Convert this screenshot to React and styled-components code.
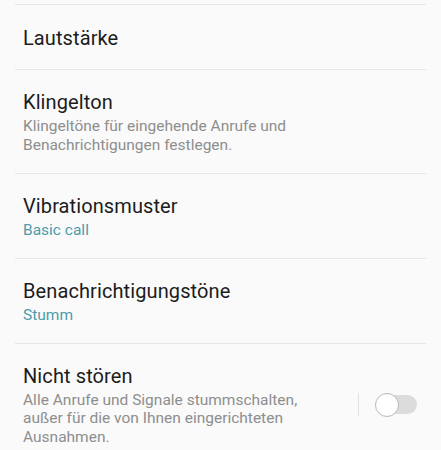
import React, { useState } from 'react';
import styled, { createGlobalStyle } from 'styled-components';

const GlobalStyle = createGlobalStyle`
  html, body {
    margin: 0;
    padding: 0;
    background: #fafafa;
  }
  body {
    font-family: Roboto, 'Noto Sans', sans-serif;
    -webkit-font-smoothing: antialiased;
  }
`;

const Page = styled.div`
  width: 441px;
  height: 450px;
  overflow: hidden;
  background: #fafafa;
  padding-top: 4px;
  box-sizing: border-box;
`;

const List = styled.ul`
  list-style: none;
  margin: 0 15px;
  padding: 0;
  border-top: 1px solid #e6e6e6;
`;

const Item = styled.li`
  display: flex;
  align-items: center;
  min-height: 65px;
  padding: 20px 9px 18.5px 8px;
  box-sizing: border-box;
  border-bottom: 1px solid #e6e6e6;
`;

const TextBlock = styled.div`
  flex: 1;
  display: flex;
  flex-direction: column;
  gap: 3px;
  max-width: 305px;
`;

const Title = styled.div`
  font-size: 20px;
  line-height: 24px;
  color: #1c1c1c;
  letter-spacing: 0.1px;
`;

const Sub = styled.div`
  font-size: 15.5px;
  line-height: 18.5px;
  color: ${(p) => (p.$accent ? '#4c9cab' : '#8e8e8e')};
`;

const Control = styled.div`
  display: flex;
  align-items: center;
  margin-left: auto;
  gap: 16px;
`;

const Rule = styled.span`
  width: 1px;
  height: 23px;
  background: #e2e2e2;
`;

const Switch = styled.button`
  position: relative;
  width: 42px;
  height: 24px;
  padding: 0;
  border: none;
  background: transparent;
  cursor: pointer;
`;

const Track = styled.span`
  position: absolute;
  right: 0;
  top: 2.5px;
  width: 34px;
  height: 19px;
  border-radius: 10px;
  background: ${(p) => (p.$on ? '#8cc4cf' : '#dcdcdc')};
`;

const Thumb = styled.span`
  position: absolute;
  top: 0;
  left: ${(p) => (p.$on ? '18px' : '0')};
  width: 24px;
  height: 24px;
  box-sizing: border-box;
  border-radius: 50%;
  background: #ffffff;
  border: 1.5px solid #b8b8b8;
`;

const items = [
  { title: 'Lautstärke' },
  { title: 'Klingelton', sub: 'Klingeltöne für eingehende Anrufe und Benachrichtigungen festlegen.' },
  { title: 'Vibrationsmuster', sub: 'Basic call', accent: true },
  { title: 'Benachrichtigungstöne', sub: 'Stumm', accent: true },
  {
    title: 'Nicht stören',
    sub: 'Alle Anrufe und Signale stummschalten, außer für die von Ihnen eingerichteten Ausnahmen.',
    toggle: true,
  },
];

const App = () => {
  const [dnd, setDnd] = useState(false);

  return (
    <>
      <GlobalStyle />
      <Page>
        <List>
          {items.map((item) => (
            <Item key={item.title}>
              <TextBlock>
                <Title>{item.title}</Title>
                {item.sub && <Sub $accent={item.accent}>{item.sub}</Sub>}
              </TextBlock>
              {item.toggle && (
                <Control>
                  <Rule />
                  <Switch onClick={() => setDnd(!dnd)} aria-pressed={dnd}>
                    <Track $on={dnd} />
                    <Thumb $on={dnd} />
                  </Switch>
                </Control>
              )}
            </Item>
          ))}
        </List>
      </Page>
    </>
  );
};

export default App;
